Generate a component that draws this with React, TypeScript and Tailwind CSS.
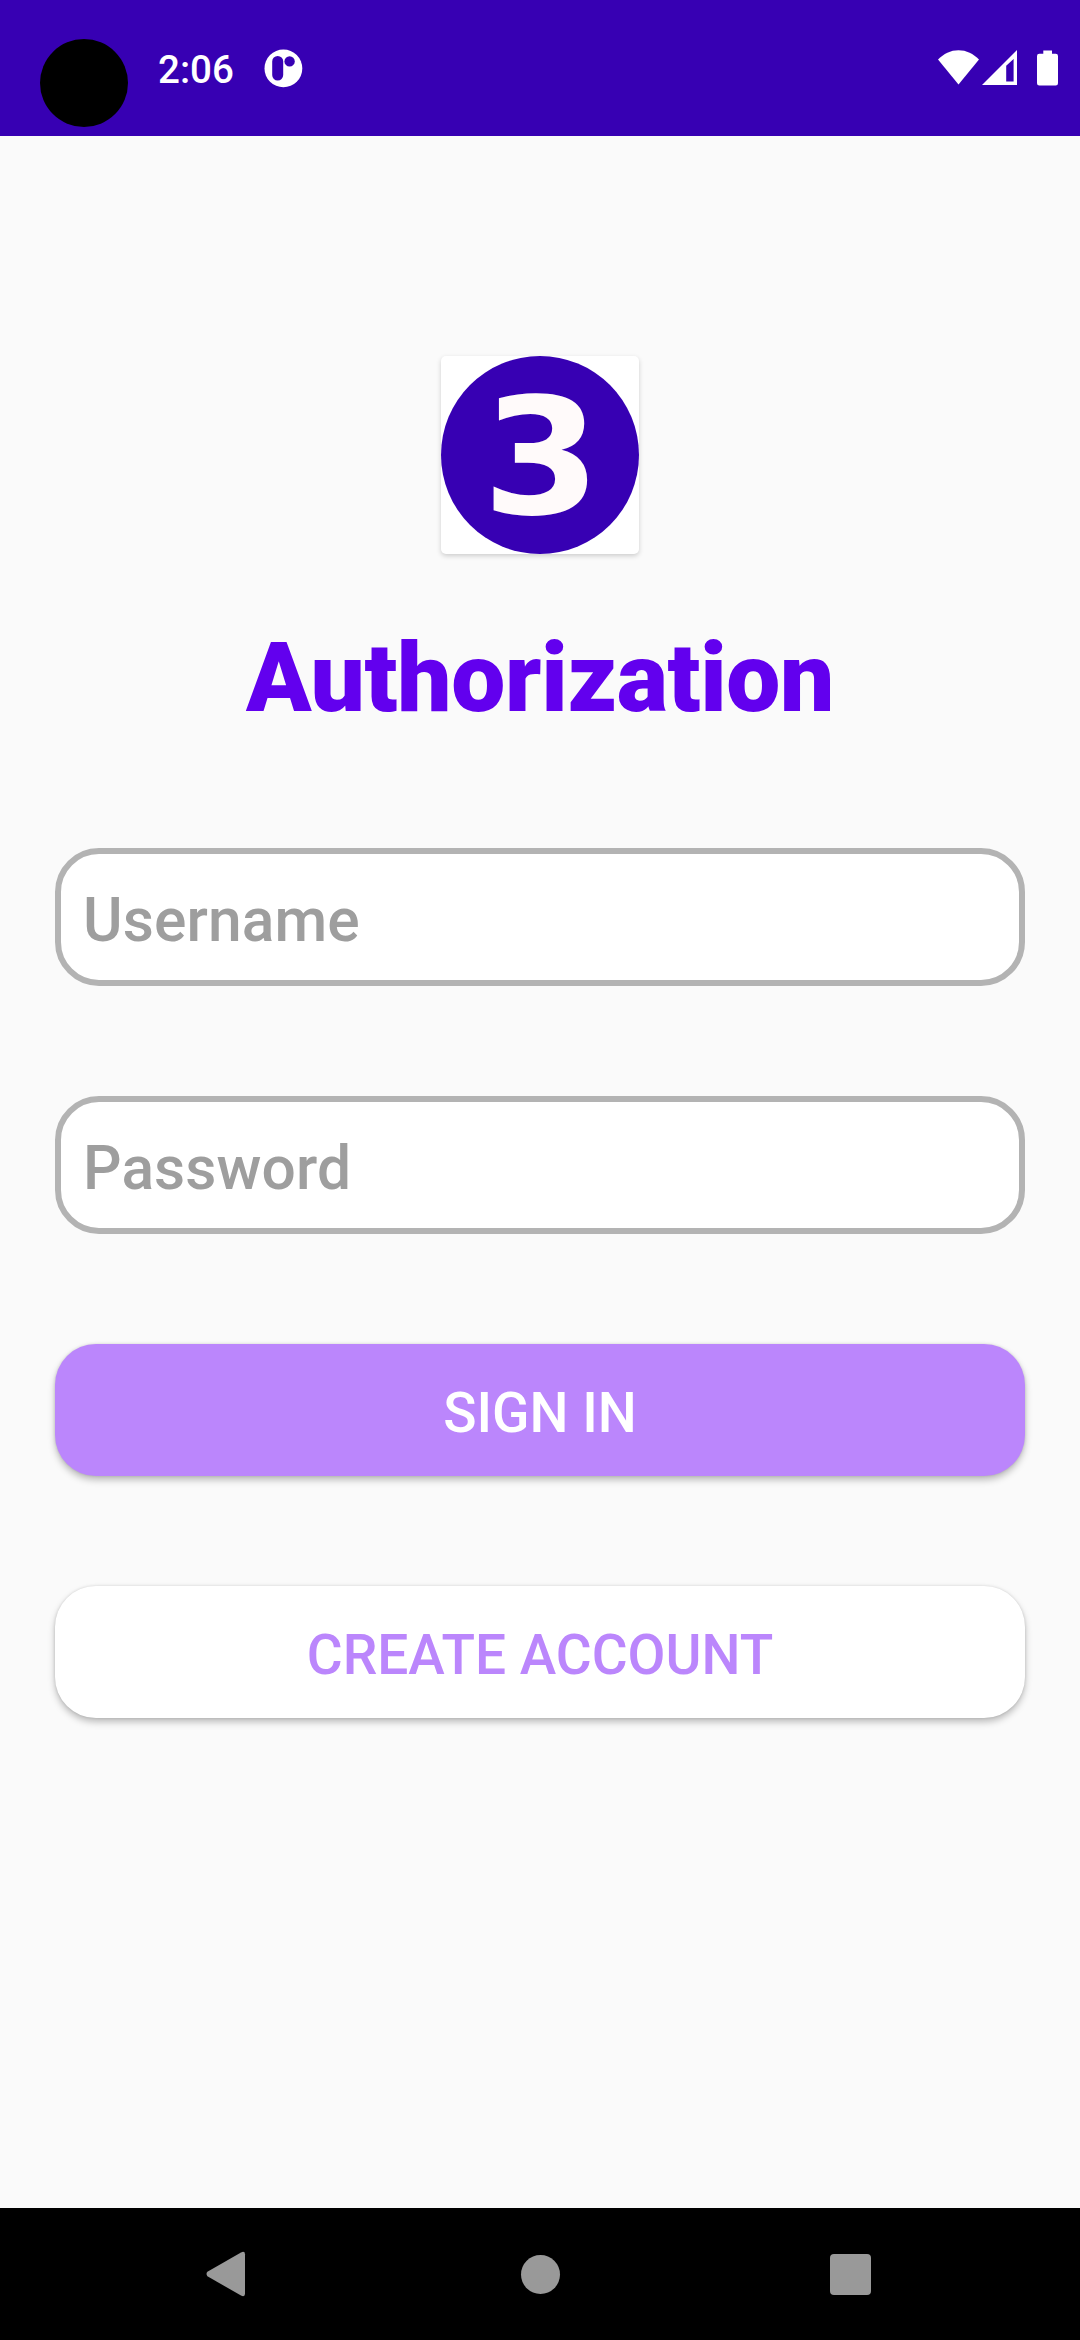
import type { ReactNode } from 'react';

function StatusBar() {
  return (
    <header className="flex h-[136px] items-start bg-[#3700b3] text-white">
      <div className="mt-[39px] ml-10 size-[88px] rounded-full bg-black" />
      <span className="mt-[47px] ml-[30px] w-[75px] text-[38.5px] leading-[46px] font-medium">2:06</span>
      <svg className="mt-[49px] ml-[31px]" width="39" height="39" viewBox="0 0 39 39">
        <circle cx="19.4" cy="19.4" r="18.9" fill="#fff" />
        <rect x="8.2" y="7" width="11" height="24.5" rx="5.5" fill="#3700b3" />
        <circle cx="25.6" cy="12.4" r="5.2" fill="#3700b3" />
      </svg>
      <svg className="mt-[50px] mr-[3px] ml-auto" width="41" height="35" viewBox="0 0 41 35">
        <path d="M0 9.6C5.6 3.6 12.6 0.2 20.5 0.2S35.4 3.6 41 9.6L20.5 34.6Z" fill="#fff" />
      </svg>
      <svg className="mt-[50px] mr-5" width="35" height="35" viewBox="0 0 35 35">
        <path fillRule="evenodd" d="M0 35L35 0V35ZM24.2 15.8V31.4H31.6V8.9Z" fill="#fff" />
      </svg>
      <svg className="mt-[50px] mr-[22px]" width="21" height="36" viewBox="0 0 21 36">
        <path d="M6.3 0.500H15V3.800H18.700Q21 3.800 21 6.100V33.200Q21 35.500 18.700 35.500H2.300Q0 35.500 0 33.200V6.100Q0 3.800 2.300 3.800H6.300Z" fill="#fff" />
      </svg>
    </header>
  );
}

function Field({ label, type }: { label: string; type: string }) {
  return (
    <input
      type={type}
      placeholder={label}
      className="block h-[138px] w-full rounded-[44px] border-[6px] border-[#b3b3b3] bg-white px-[22px] pt-[6px] pb-0 text-[60.5px] font-medium tracking-[0.1px] outline-none placeholder:text-[#9e9e9e] placeholder:opacity-100"
    />
  );
}

function Button({ className, children }: { className: string; children: ReactNode }) {
  return (
    <button
      className={`flex h-[132px] w-full items-center justify-center rounded-[41px] pt-[6px] text-[55px] leading-none font-medium shadow-[0_4px_7px_rgba(0,0,0,0.25),0_0_3px_rgba(0,0,0,0.12)] ${className}`}
    >
      {children}
    </button>
  );
}

function NavBar() {
  return (
    <nav className="flex h-[132px] items-center justify-between bg-black px-[205px]">
      <svg width="42" height="46" viewBox="0 0 42 46">
        <path d="M2.4 20.8L36 1.400Q40 -0.300 40 3.200V42.800Q40 46.300 36 44.600L2.400 25.200Q0.600 23 2.400 20.800Z" fill="#999" />
      </svg>
      <div className="ml-[3px] size-[39px] rounded-full bg-[#999]" />
      <div className="mr-[4px] size-[41px] rounded bg-[#999]" />
    </nav>
  );
}

export default function App() {
  return (
    <div className="flex h-[2340px] w-[1080px] flex-col bg-[#fafafa] font-['Roboto',sans-serif]">
      <StatusBar />
      <main className="flex flex-1 flex-col items-center px-[55px] pt-[220px]">
        <div className="size-[198px] overflow-hidden rounded-[5px] bg-white shadow-[0_2px_5px_rgba(0,0,0,0.18)]">
          <svg width="198" height="198" viewBox="0 0 198 198">
            <circle cx="99" cy="99" r="99" fill="#3700b3" />
            <text transform="translate(41.3 158) scale(1.05 1)" fill="#fffafa" fontFamily="DejaVu Sans" fontWeight="700" fontSize="162">3</text>
          </svg>
        </div>
        <h1 className="mt-[68px] h-[111px] text-[96.25px] leading-[113px] font-black tracking-[-0.33px] text-[#6200ee]">Authorization</h1>
        <form className="mt-[115px] flex w-full flex-col gap-[110px]">
          <Field label="Username" type="text" />
          <Field label="Password" type="password" />
          <Button className="bg-[#bb86fc] text-white">SIGN IN</Button>
          <Button className="bg-white text-[#bb86fc]">CREATE ACCOUNT</Button>
        </form>
      </main>
      <NavBar />
    </div>
  );
}
